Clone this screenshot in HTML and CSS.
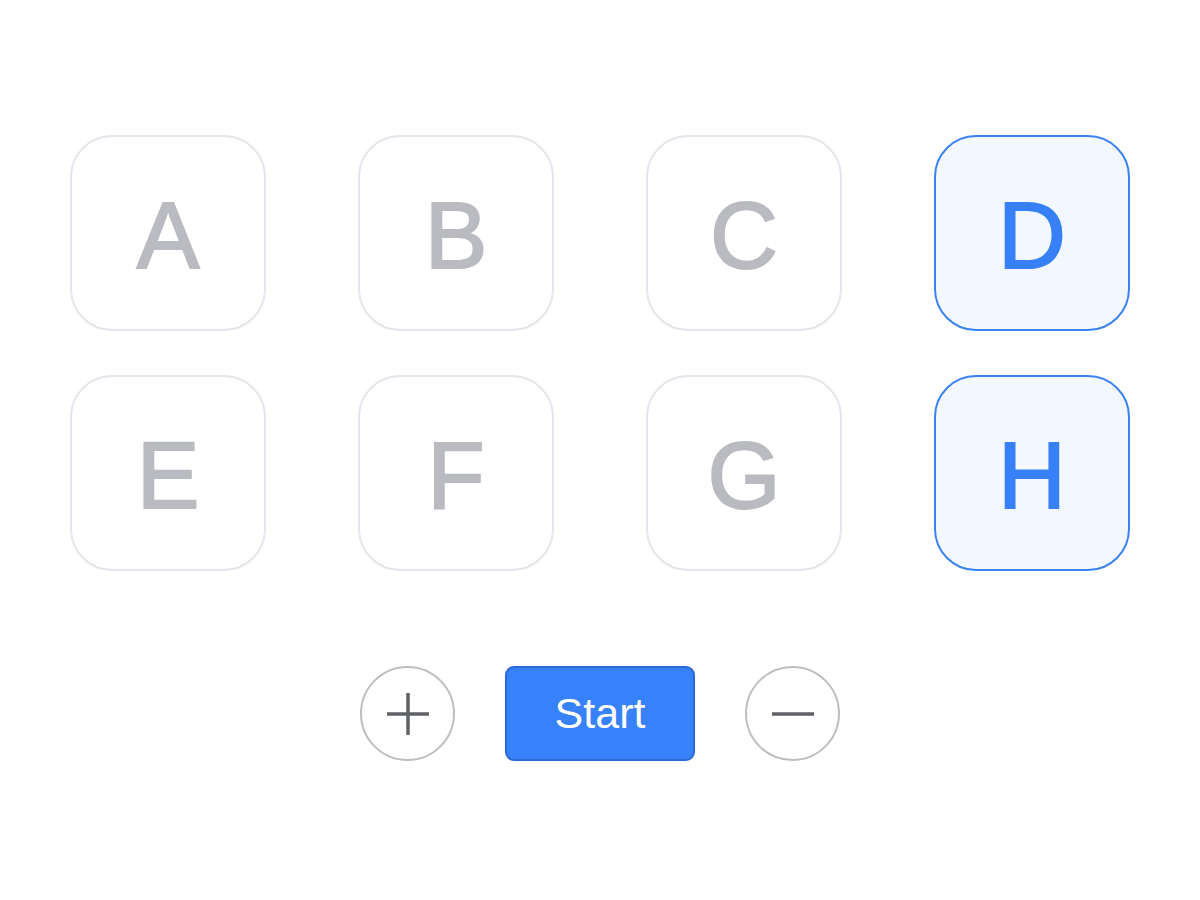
FILE: index.html
```html
<!DOCTYPE html>
<html>
<head>
<meta charset="utf-8">
<link rel="stylesheet" href="styles.css">
</head>
<body>
<div class="page">
  <div class="grid">
    <div class="card">A</div>
    <div class="card">B</div>
    <div class="card">C</div>
    <div class="card active">D</div>
    <div class="card">E</div>
    <div class="card">F</div>
    <div class="card">G</div>
    <div class="card active">H</div>
  </div>
  <div class="controls">
    <button class="round" aria-label="add">
      <svg width="44" height="44" viewBox="0 0 44 44"><path d="M22 1V43M1 22H43" stroke="#5f6266" stroke-width="3.5" fill="none"/></svg>
    </button>
    <button class="start">Start</button>
    <button class="round" aria-label="remove">
      <svg width="44" height="44" viewBox="0 0 44 44"><path d="M1 22H43" stroke="#5f6266" stroke-width="3.5" fill="none"/></svg>
    </button>
  </div>
</div>
</body>
</html>
```
FILE: styles.css
```css
html, body {
  margin: 0;
  padding: 0;
  background: #ffffff;
}
.page {
  width: 1060px;
  margin: 0 auto;
  padding-top: 135px;
  font-family: "Liberation Sans", Arial, sans-serif;
}
.grid {
  display: grid;
  grid-template-columns: repeat(4, 196px);
  column-gap: 92px;
  row-gap: 44px;
}
.card {
  box-sizing: border-box;
  width: 196px;
  height: 196px;
  border: 2px solid #e3e6ec;
  border-radius: 42px;
  background: #ffffff;
  display: flex;
  align-items: center;
  justify-content: center;
  font-size: 94px;
  line-height: 1;
  color: #b9bbc0;
  -webkit-text-stroke: 2px #b9bbc0;
  padding-top: 6px;
}
.card.active {
  border-color: #3b82f0;
  background: #f3f7ff;
  color: #3780f7;
  -webkit-text-stroke: 2px #3780f7;
}
.controls {
  display: flex;
  justify-content: center;
  align-items: center;
  gap: 50px;
  margin-top: 95px;
}
.round {
  box-sizing: border-box;
  width: 95px;
  height: 95px;
  border-radius: 50%;
  border: 2px solid #bdbec0;
  background: #ffffff;
  padding: 0;
  display: flex;
  align-items: center;
  justify-content: center;
}
.start {
  box-sizing: border-box;
  width: 190px;
  height: 95px;
  border: 2px solid #2a6ad2;
  border-radius: 9px;
  background: #3781fb;
  color: #ffffff;
  font-family: "Liberation Sans", Arial, sans-serif;
  font-size: 43px;
  padding: 0;
}
```
